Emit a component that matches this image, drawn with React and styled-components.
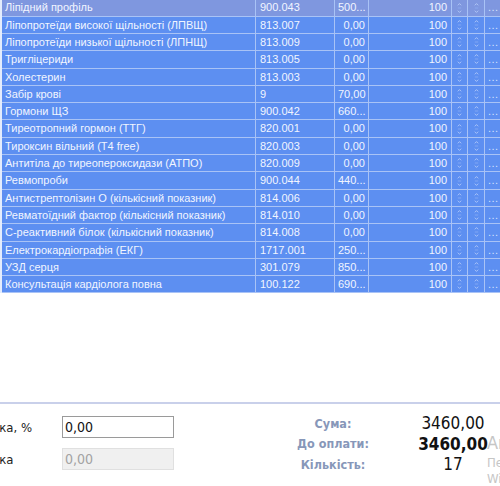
import React from "react";
import styled, { createGlobalStyle } from "styled-components";

const Global = createGlobalStyle`
  html, body { margin: 0; padding: 0; background: #ffffff; }
  body { width: 500px; height: 486px; overflow: hidden; font-family: "DejaVu Sans Condensed", "DejaVu Sans", sans-serif; }
`;

const Page = styled.div`
  width: 500px;
  height: 486px;
  display: flex;
  flex-direction: column;
  overflow: hidden;
  position: relative;
`;

const GridArea = styled.div`
  height: 402px;
  flex: none;
  overflow: hidden;
`;

const Grid = styled.div`
  margin-top: -0.6px;
  border-left: 2px solid #e4ecfc;
  width: 540px;
`;

const Row = styled.div`
  display: flex;
  height: 16.3px;
  border-bottom: 1px solid #a9c3f6;
  background: ${(p) => (p.$current ? "#7f97df" : "#5d8ff1")};
  color: #f1f5ff;
  font-family: "Liberation Sans", Arial, sans-serif;
  font-size: 11px;
  line-height: 16.3px;
`;

const Cell = styled.div`
  flex: none;
  width: ${(p) => p.$w}px;
  box-sizing: border-box;
  border-right: 1px solid #a9c3f6;
  padding: 0 ${(p) => p.$pad ?? 4}px;
  text-align: ${(p) => p.$align || "left"};
  white-space: nowrap;
  overflow: hidden;
  display: ${(p) => (p.$center ? "flex" : "block")};
  align-items: center;
  justify-content: center;
`;

const Dots = styled.span`
  color: #d6e2fd;
  letter-spacing: 0.5px;
`;

const Divider = styled.div`
  height: 2px;
  background: #c9d0ea;
  flex: none;
`;

const Footer = styled.div`
  flex: 1;
  display: flex;
  align-items: flex-start;
`;

const Form = styled.div`
  display: grid;
  grid-template-columns: 62px 112px;
  row-gap: 10px;
  padding-top: 12px;
  align-items: center;
`;

const Label = styled.div`
  font-size: 13px;
  color: #222;
  white-space: nowrap;
  margin-left: -34px;
`;

const Input = styled.div`
  height: 22px;
  box-sizing: border-box;
  border: 1px solid ${(p) => (p.$disabled ? "#e0e0e0" : "#9a9a9a")};
  background: ${(p) => (p.$disabled ? "#f0f0f0" : "#fff")};
  color: ${(p) => (p.$disabled ? "#a3a3a3" : "#111")};
  font-size: 14px;
  line-height: 20px;
  padding-left: 2px;
`;

const Summary = styled.div`
  margin-left: 99px;
  padding-top: 9px;
  display: grid;
  grid-template-columns: 120px 120px;
  grid-auto-rows: 20.5px;
  align-items: center;
`;

const SumLabel = styled.div`
  text-align: center;
  font-weight: bold;
  font-size: 12.5px;
  color: #8797b9;
`;

const SumValue = styled.div`
  text-align: center;
  font-size: 17px;
  font-weight: ${(p) => (p.$bold ? "bold" : "normal")};
  color: #111;
  position: relative;
  z-index: 1;
`;

const Watermark = styled.div`
  position: absolute;
  left: 487px;
  top: 434px;
  color: #c6c6c6;
  white-space: nowrap;
  line-height: 1;
`;

const WmTitle = styled.div`
  font-size: 18px;
  height: 22px;
`;

const WmText = styled.div`
  font-size: 13px;
  height: 16px;
`;

function Spin() {
  return (
    <svg width="7" height="14" viewBox="0 0 7 14">
      <path d="M1.8 4.3 L3.5 2.6 L5.2 4.3" fill="none" stroke="#bdd0fa" strokeWidth="0.8" />
      <path d="M1.8 7 H5.2" stroke="#8fb0f3" strokeWidth="0.7" />
      <path d="M1.8 9.7 L3.5 11.4 L5.2 9.7" fill="none" stroke="#bdd0fa" strokeWidth="0.8" />
    </svg>
  );
}

const rows = [
  ["Ліпідний профіль", "900.043", "500...", true],
  ["Ліпопротеїди високої щільності (ЛПВЩ)", "813.007", "0,00"],
  ["Ліпопротеїди низької щільності (ЛПНЩ)", "813.009", "0,00"],
  ["Тригліцериди", "813.005", "0,00"],
  ["Холестерин", "813.003", "0,00"],
  ["Забір крові", "9", "70,00"],
  ["Гормони ЩЗ", "900.042", "660..."],
  ["Тиреотропний гормон (ТТГ)", "820.001", "0,00"],
  ["Тироксин вільний (T4 free)", "820.003", "0,00"],
  ["Антитіла до тиреопероксидази (АТПО)", "820.009", "0,00"],
  ["Ревмопроби", "900.044", "440..."],
  ["Антистрептолізин О (кількісний показник)", "814.006", "0,00"],
  ["Ревматоїдний фактор (кількісний показник)", "814.010", "0,00"],
  ["С-реактивний білок (кількісний показник)", "814.008", "0,00"],
  ["Електрокардіографія (ЕКГ)", "1717.001", "250..."],
  ["УЗД серця", "301.079", "850..."],
  ["Консультація кардіолога повна", "100.122", "690..."],
];

export default function App() {
  return (
    <>
      <Global />
      <Page>
        <GridArea>
          <Grid>
            {rows.map(([name, code, price, cur]) => (
              <Row key={code} $current={cur}>
                <Cell $w={254} $pad={3}>{name}</Cell>
                <Cell $w={79}>{code}</Cell>
                <Cell $w={34} $align="right" $pad={3}>{price}</Cell>
                <Cell $w={83} $align="right">100</Cell>
                <Cell $w={16} $center $pad={0}><Spin /></Cell>
                <Cell $w={17} $center $pad={0}><Spin /></Cell>
                <Cell $w={40} $pad={3}><Dots>...</Dots></Cell>
              </Row>
            ))}
          </Grid>
        </GridArea>
        <Divider />
        <Footer>
          <Form>
            <Label>Знижка, %</Label>
            <Input>0,00</Input>
            <Label>Знижка</Label>
            <Input $disabled>0,00</Input>
          </Form>
          <Summary>
            <SumLabel>Сума:</SumLabel>
            <SumValue>3460,00</SumValue>
            <SumLabel>До оплати:</SumLabel>
            <SumValue $bold>3460,00</SumValue>
            <SumLabel>Кількість:</SumLabel>
            <SumValue>17</SumValue>
          </Summary>
        </Footer>
        <Watermark>
          <WmTitle>Активація Windows</WmTitle>
          <WmText>Перейдіть до розділу "Параметри",</WmText>
          <WmText>Windows.</WmText>
        </Watermark>
      </Page>
    </>
  );
}
